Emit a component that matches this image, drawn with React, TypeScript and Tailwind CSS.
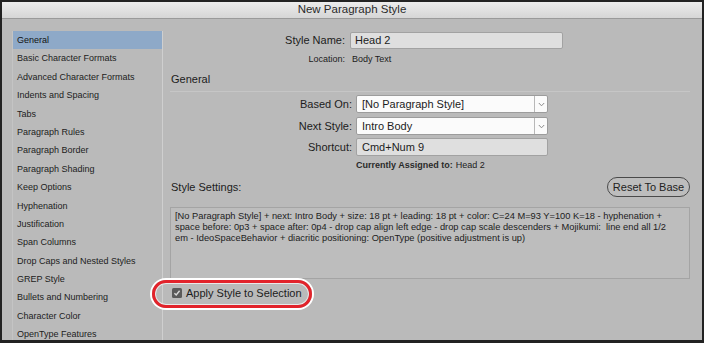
const items = [
  'General',
  'Basic Character Formats',
  'Advanced Character Formats',
  'Indents and Spacing',
  'Tabs',
  'Paragraph Rules',
  'Paragraph Border',
  'Paragraph Shading',
  'Keep Options',
  'Hyphenation',
  'Justification',
  'Span Columns',
  'Drop Caps and Nested Styles',
  'GREP Style',
  'Bullets and Numbering',
  'Character Color',
  'OpenType Features',
]

function Chevron() {
  return (
    <svg width="7" height="5" viewBox="0 0 7 5" fill="none">
      <path d="M0.8 1 L3.5 3.8 L6.2 1" stroke="#8a8a8a" strokeWidth="1" />
    </svg>
  )
}

function Select({ value }: { value: string }) {
  return (
    <div className="flex h-[18px] w-[192px] border border-[#9c9c9c] bg-[#fbfbfb] rounded-[2px]">
      <div className="flex-1 pl-[5px] text-[11px] leading-[16px] text-[#1c1c1c]">{value}</div>
      <div className="w-[13px] border-l border-[#b8b8b8] flex items-center justify-center">
        <Chevron />
      </div>
    </div>
  )
}

export default function App() {
  return (
    <div
      className="w-[704px] h-[343px] overflow-hidden bg-[#bababa] border-x-2 border-t-2 border-b-[3px] border-[#222] flex flex-col text-[#1c1c1c]"
      style={{ fontFamily: '"Liberation Sans", Arial, sans-serif' }}
    >
      {/* title bar */}
      <div className="h-[17px] shrink-0 border-b border-[#9a9a9a] bg-gradient-to-b from-[#ececec] to-[#d6d6d6] flex items-center justify-center text-[11.5px] text-[#2a2a2a]">
        New Paragraph Style
      </div>

      <div className="flex flex-1">
        {/* category list */}
        <div className="pl-[10px] pt-[12px]">
          <div className="w-[151px] h-full border-l border-[#c4c4c4] border-r border-r-[#cfcfcf]">
            {items.map((it, i) => (
              <div
                key={it}
                className={`h-[18.4px] leading-[18.4px] pl-[4px] text-[9px] whitespace-nowrap ${
                  i === 0 ? 'bg-[#8ea9c8] text-[#111]' : 'text-[#1c1c1c]'
                }`}
              >
                {it}
              </div>
            ))}
          </div>
        </div>

        {/* settings */}
        <div className="flex-1 pl-[7px] pr-[16px] flex flex-col">
          <div className="mt-[13px] h-[17px] flex items-center">
            <div className="w-[175px] text-right text-[11px]">Style Name:</div>
            <div className="ml-[5px] w-[213px] h-[17px] bg-[#dfdfdf] border border-[#a2a2a2] rounded-[2px] pl-[4px] text-[11px] leading-[15px]">
              Head 2
            </div>
          </div>

          <div className="mt-[4px] h-[14px] flex items-center text-[9px]">
            <div className="w-[175px] text-right">Location:</div>
            <div className="ml-[7px]">Body Text</div>
          </div>

          <div className="mt-[5px] h-[14px] flex items-center text-[11px] pl-[1px]">General</div>
          <div className="mt-[5px] h-px w-[520px] bg-[#c6c6c6]" />

          <div className="mt-[3px] flex items-center">
            <div className="w-[182px] text-right text-[11px]">Based On:</div>
            <div className="ml-[4px]">
              <Select value="[No Paragraph Style]" />
            </div>
          </div>

          <div className="mt-[4px] flex items-center">
            <div className="w-[182px] text-right text-[11px]">Next Style:</div>
            <div className="ml-[4px]">
              <Select value="Intro Body" />
            </div>
          </div>

          <div className="mt-[3px] flex items-center">
            <div className="w-[182px] text-right text-[11px]">Shortcut:</div>
            <div className="ml-[4px] w-[192px] h-[18px] bg-[#dfdfdf] border border-[#a2a2a2] rounded-[2px] pl-[5px] text-[11px] leading-[16px]">
              Cmd+Num 9
            </div>
          </div>

          <div className="mt-[4px] h-[12px] flex items-center text-[9px] pl-[186px] whitespace-nowrap">
            <span className="font-bold text-[#2a2a2a]">Currently Assigned to:</span>
            <span className="ml-[3px]">Head 2</span>
          </div>

          <div className="mt-[5px] flex items-center justify-between">
            <div className="text-[11px] pl-[1px]">Style Settings:</div>
            <button className="w-[83px] h-[20px] rounded-full border border-[#4a4a4a] bg-[#bdbdbd] text-[11px] text-[#222]">
              Reset To Base
            </button>
          </div>

          <div className="mt-[10px] h-[72px] border border-[#a4a4a4] bg-[#bdbdbd] px-[4px] pt-[3px] text-[9.3px] leading-[11px] text-[#1c1c1c]">
            <div className="whitespace-nowrap">
              [No Paragraph Style] + next: Intro Body + size: 18 pt + leading: 18 pt + color: C=24 M=93 Y=100 K=18 - hyphenation +
            </div>
            <div className="whitespace-nowrap">
              space before: 0p3 + space after: 0p4 - drop cap align left edge - drop cap scale descenders + Mojikumi:&nbsp; line end all 1/2
            </div>
            <div className="whitespace-nowrap">
              em - IdeoSpaceBehavior + diacritic positioning: OpenType (positive adjustment is up)
            </div>
          </div>

          <div className="relative mt-[9px] h-[10px] flex items-center pl-[2px]">
            <div className="absolute left-[-18px] top-[-8px] w-[160px] h-[28px] rounded-[14px] border-[3px] border-[#e2232b] shadow-[0_0_0_2px_#ffffff,inset_0_0_0_1px_#e9e9e9]" />
            <svg width="10" height="10" viewBox="0 0 10 10">
              <rect x="0" y="0" width="10" height="10" rx="1.5" fill="#5a5a5a" />
              <path d="M2.4 5.2 L4.2 7 L7.6 2.8" stroke="#d8d8d8" strokeWidth="1.4" fill="none" />
            </svg>
            <div className="ml-[4px] text-[11px] whitespace-nowrap">Apply Style to Selection</div>
          </div>
        </div>
      </div>
    </div>
  )
}
